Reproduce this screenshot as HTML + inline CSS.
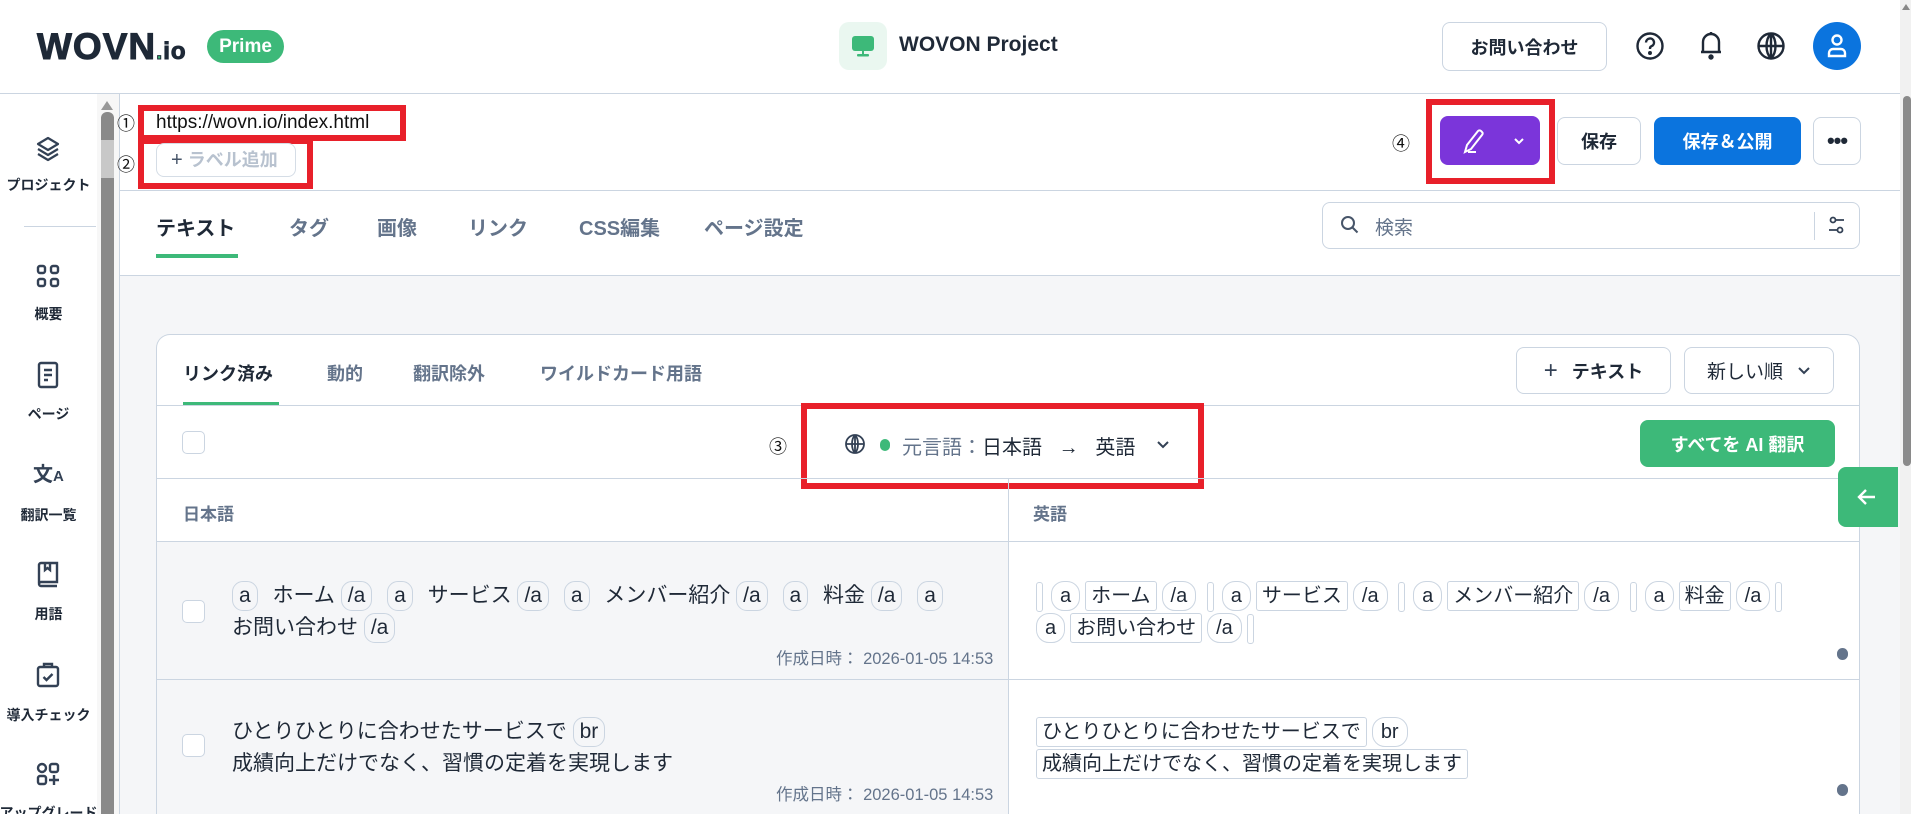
<!DOCTYPE html>
<html style="overflow:hidden;height:814px"><head><meta charset="utf-8">
<style>
*{box-sizing:border-box;margin:0;padding:0}
body{width:1911px;height:814px;overflow:hidden;background:#fff;font-family:"Liberation Sans","Noto Sans CJK JP",sans-serif;color:#1f2937;position:relative}
.a{position:absolute}
.btn{position:absolute;border:1px solid #cbd5e1;border-radius:8px;background:#fff;display:flex;align-items:center;justify-content:center;font-weight:bold;font-size:18px;color:#1f2937}
.red{position:absolute;border:6px solid #e8202a}
.sl{position:absolute;left:-10px;width:117px;text-align:center;font-size:14px;font-weight:bold;color:#1f2937;white-space:nowrap}
.si{position:absolute;left:34px;width:28px;height:28px}
.tab{position:absolute;top:212px;font-size:20px;color:#64748b;font-weight:bold}
.ct{position:absolute;top:360px;font-size:18px;color:#64748b;font-weight:bold}
.cb{position:absolute;left:182px;width:23px;height:23px;border:1.5px solid #cbd5e1;border-radius:5px;background:#fff}
.t{display:inline-block;border:1px solid #cbd5e1;border-radius:11px;padding:0 6px;line-height:28px;margin:0 9px 0 0}
.r{display:inline-block;border:1px solid #cbd5e1;border-radius:3px;padding:0 5px;line-height:28px;margin-right:5px}
.p{display:inline-block;border:1px solid #cbd5e1;border-radius:13px;padding:0 8px;line-height:28px;margin-right:5px}
.bar{display:inline-block;width:7px;height:30px;border:1px solid #cbd5e1;border-radius:3px;vertical-align:middle;margin-right:8px}
.date{position:absolute;font-size:16.5px;color:#64748b}
.num{position:absolute;font-size:18px;color:#111}
</style></head><body>
<div class="a" style="left:37px;top:26px;font-size:37px;font-weight:900;color:#1e2937;letter-spacing:1px;-webkit-text-stroke:1px #1e2937">WOVN<span style="color:#3db979;font-size:22px">.</span><span style="font-size:24px">io</span></div>
<div class="a" style="left:207px;top:30px;width:77px;height:33px;border-radius:17px;background:#3db979;color:#fff;font-weight:bold;font-size:19px;text-align:center;line-height:33px">Prime</div>
<div class="a" style="left:839px;top:22px;width:48px;height:48px;border-radius:10px;background:#eaf7f0"></div>
<svg class="a" style="left:850px;top:33px" width="26" height="26" viewBox="0 0 26 26"><rect x="2" y="3" width="22" height="15" rx="3" fill="#3db979"/><rect x="12" y="18" width="2" height="4" fill="#3db979"/><rect x="7" y="21" width="12" height="2.5" rx="1" fill="#3db979"/></svg>
<div class="a" style="left:899px;top:33px;font-size:21px;font-weight:bold;color:#1f2937">WOVON Project</div>
<div class="btn" style="left:1442px;top:22px;width:165px;height:49px;font-size:18px">お問い合わせ</div>
<svg class="a" style="left:1635px;top:31px" width="30" height="30" viewBox="0 0 30 30" fill="none" stroke="#1f2937" stroke-width="2.4"><circle cx="15" cy="15" r="12.5"/><path d="M11 11.5a4 4 0 1 1 5.5 3.7c-1 .4-1.5 1.2-1.5 2.3v.5"/><circle cx="15" cy="22" r=".8" fill="#1f2937"/></svg>
<svg class="a" style="left:1697px;top:29px" width="28" height="32" viewBox="0 0 28 32" fill="none" stroke="#1f2937" stroke-width="2.4"><path d="M6 23V13a8 8 0 0 1 16 0v10h2H4zM14 3v2"/><circle cx="14" cy="28" r="1.5" fill="#1f2937"/></svg>
<svg class="a" style="left:1756px;top:31px" width="30" height="30" viewBox="0 0 30 30" fill="none" stroke="#1f2937" stroke-width="2.4"><circle cx="15" cy="15" r="12.5"/><path d="M2.5 15h25M15 2.5c-6 6-6 19 0 25M15 2.5c6 6 6 19 0 25M15 2.5v25"/></svg>
<div class="a" style="left:1813px;top:22px;width:48px;height:48px;border-radius:50%;background:#0b74de"></div>
<svg class="a" style="left:1825px;top:33px" width="24" height="26" viewBox="0 0 24 26" fill="none" stroke="#fff" stroke-width="2.4"><circle cx="12" cy="7" r="4.5"/><path d="M4 23v-3a4 4 0 0 1 4-4h8a4 4 0 0 1 4 4v3z"/></svg>
<div class="a" style="left:0;top:93px;width:1900px;height:1px;background:#cbd5e1"></div>
<div class="a" style="left:1900px;top:0;width:11px;height:814px;background:#f1f1f1"></div>
<div class="a" style="left:1902px;top:4px;width:0;height:0;border-left:4px solid transparent;border-right:4px solid transparent;border-bottom:6px solid #888"></div>
<div class="a" style="left:1903px;top:96px;width:8px;height:370px;background:#8a8a8a;border-radius:4px"></div>
<div class="a" style="left:97px;top:94px;width:22px;height:720px;background:#f7f7f7"></div>
<div class="a" style="left:101px;top:101px;width:0;height:0;border-left:6px solid transparent;border-right:6px solid transparent;border-bottom:9px solid #999"></div>
<div class="a" style="left:101px;top:112px;width:13px;height:702px;background:#8a8a8a;border-radius:6px 6px 0 0"></div>
<div class="a" style="left:101px;top:140px;width:13px;height:38px;background:#c8c8c8"></div>
<div class="a" style="left:119px;top:94px;width:1px;height:720px;background:#cbd5e1"></div>
<svg class="si" style="top:135px" viewBox="0 0 28 28" fill="none" stroke="#334155" stroke-width="2.2" stroke-linejoin="round"><path d="M14 3l10 6-10 6-10-6zM4 14l10 6 10-6M4 19l10 6 10-6"/></svg>
<div class="sl" style="top:175px">プロジェクト</div>
<div class="a" style="left:24px;top:226px;width:72px;height:1px;background:#cbd5e1"></div>
<svg class="si" style="top:262px" viewBox="0 0 28 28" fill="none" stroke="#334155" stroke-width="2.4"><rect x="4" y="4" width="7" height="7" rx="2"/><rect x="17" y="4" width="7" height="7" rx="2"/><rect x="4" y="17" width="7" height="7" rx="2"/><rect x="17" y="17" width="7" height="7" rx="2"/></svg>
<div class="sl" style="top:304px">概要</div>
<svg class="si" style="top:361px" viewBox="0 0 28 28" fill="none" stroke="#334155" stroke-width="2.4"><rect x="5" y="2" width="18" height="24" rx="2"/><path d="M10 9h8M10 14h8M10 19h4"/></svg>
<div class="sl" style="top:404px">ページ</div>
<div class="a" style="left:33px;top:458px;font-size:20px;font-weight:bold;color:#334155">文<span style="font-size:15px">A</span></div>
<div class="sl" style="top:505px">翻訳一覧</div>
<svg class="si" style="top:560px" viewBox="0 0 28 28" fill="none" stroke="#334155" stroke-width="2.4"><path d="M5 23V5a2 2 0 0 1 2-2h16v19H7a2 2 0 0 0 0 4h16M11 3v7l2.5-2 2.5 2V3"/></svg>
<div class="sl" style="top:604px">用語</div>
<svg class="si" style="top:661px" viewBox="0 0 28 28" fill="none" stroke="#334155" stroke-width="2.4"><rect x="4" y="6" width="20" height="19" rx="2"/><path d="M10 6V3h8v3M9.5 16l3 3 6-6"/></svg>
<div class="sl" style="top:705px">導入チェック</div>
<svg class="si" style="top:760px" viewBox="0 0 28 28" fill="none" stroke="#334155" stroke-width="2.4"><circle cx="8" cy="8" r="4"/><rect x="16" y="4" width="8" height="8" rx="2"/><rect x="4" y="16" width="8" height="8" rx="2"/><path d="M20 15v10M15 20h10"/></svg>
<div class="sl" style="top:803px">アップグレード</div>
<div class="num" style="left:117px;top:110px">①</div>
<div class="red" style="left:138px;top:105px;width:268px;height:36px"></div>
<div class="a" style="left:156px;top:112px;font-size:19px;color:#111">https://wovn.io/index.html</div>
<div class="num" style="left:117px;top:151px">②</div>
<div class="red" style="left:138px;top:138px;width:175px;height:51px"></div>
<div class="a" style="left:156px;top:143px;width:140px;height:34px;border:1px solid #d5dde6;border-radius:8px;font-size:18px;color:#b8c2cf;font-weight:bold;line-height:32px;padding-left:14px"><span style="color:#475569;font-weight:normal;font-size:20px">+</span> ラベル追加</div>
<div class="num" style="left:1392px;top:130px">④</div>
<div class="red" style="left:1426px;top:99px;width:129px;height:85px"></div>
<div class="a" style="left:1440px;top:116px;width:100px;height:49px;background:#7b35da;border-radius:8px"></div>
<svg class="a" style="left:1462px;top:127px" width="70" height="28" viewBox="0 0 70 28" fill="none" stroke="#fff" stroke-width="2"><path d="M3 25l2-7L16 4a2 2 0 0 1 3 0l1 1a2 2 0 0 1 0 3L9 22zM6 25h8M53 12l4 4 4-4"/></svg>
<div class="btn" style="left:1557px;top:117px;width:84px;height:48px">保存</div>
<div class="btn" style="left:1654px;top:117px;width:147px;height:48px;background:#0b74de;border-color:#0b74de;color:#fff">保存＆公開</div>
<div class="btn" style="left:1813px;top:117px;width:48px;height:48px;font-size:22px;letter-spacing:-1px">•••</div>
<div class="a" style="left:119px;top:190px;width:1781px;height:1px;background:#cbd5e1"></div>
<div class="tab" style="left:156px;color:#1f2937">テキスト</div>
<div class="a" style="left:156px;top:254px;width:82px;height:4px;background:#3db979"></div>
<div class="tab" style="left:289px">タグ</div>
<div class="tab" style="left:377px">画像</div>
<div class="tab" style="left:468px">リンク</div>
<div class="tab" style="left:579px">CSS編集</div>
<div class="tab" style="left:704px">ページ設定</div>
<div class="a" style="left:1322px;top:202px;width:538px;height:47px;border:1px solid #cbd5e1;border-radius:8px"></div>
<svg class="a" style="left:1340px;top:215px" width="20" height="20" viewBox="0 0 20 20" fill="none" stroke="#475569" stroke-width="2"><circle cx="8" cy="8" r="6"/><path d="M12.5 12.5l5 5"/></svg>
<div class="a" style="left:1375px;top:213px;font-size:19px;color:#64748b">検索</div>
<div class="a" style="left:1814px;top:212px;width:1px;height:28px;background:#cbd5e1"></div>
<svg class="a" style="left:1826px;top:214px" width="22" height="22" viewBox="0 0 22 22" fill="none" stroke="#334155" stroke-width="1.8"><circle cx="7" cy="6" r="2.5"/><path d="M10 6h8M3 16h8"/><circle cx="14" cy="16" r="2.5"/></svg>
<div class="a" style="left:120px;top:275px;width:1780px;height:539px;background:#f5f6f8;border-top:1px solid #cbd5e1"></div>
<div class="a" style="left:156px;top:334px;width:1704px;height:480px;background:#fff;border:1px solid #cbd5e1;border-bottom:none;border-radius:14px 14px 0 0"></div>
<div class="ct" style="left:183px;color:#1f2937">リンク済み</div>
<div class="a" style="left:183px;top:402px;width:96px;height:4px;background:#3db979"></div>
<div class="ct" style="left:327px">動的</div>
<div class="ct" style="left:413px">翻訳除外</div>
<div class="ct" style="left:540px">ワイルドカード用語</div>
<div class="btn" style="left:1516px;top:347px;width:155px;height:47px"><span style="font-weight:normal;font-size:24px;margin-right:14px;color:#334155">+</span>テキスト</div>
<div class="btn" style="left:1684px;top:347px;width:150px;height:47px;font-weight:normal;font-size:19px">新しい順<svg style="margin-left:14px" width="14" height="10" viewBox="0 0 14 10" fill="none" stroke="#334155" stroke-width="2"><path d="M2 2l5 5 5-5"/></svg></div>
<div class="a" style="left:157px;top:405px;width:1702px;height:1px;background:#cbd5e1"></div>
<div class="cb" style="top:431px"></div>
<div class="num" style="left:769px;top:433px">③</div>
<div class="red" style="left:801px;top:403px;width:403px;height:86px"></div>
<svg class="a" style="left:844px;top:433px" width="22" height="22" viewBox="0 0 22 22" fill="none" stroke="#334155" stroke-width="1.8"><circle cx="11" cy="11" r="9"/><path d="M2 11h18M11 2v18M11 2c-4 4-4 14 0 18M11 2c4 4 4 14 0 18"/></svg>
<div class="a" style="left:880px;top:439px;width:10px;height:12px;border-radius:5px;background:#3db979"></div>
<div class="a" style="left:902px;top:431px;font-size:20px;color:#64748b;white-space:nowrap">元言語：<span style="color:#1f2937">日本語 &nbsp;&nbsp;→&nbsp;&nbsp; 英語</span></div>
<svg class="a" style="left:1156px;top:440px" width="14" height="10" viewBox="0 0 14 10" fill="none" stroke="#334155" stroke-width="2"><path d="M2 2l5 5 5-5"/></svg>
<div class="btn" style="left:1640px;top:420px;width:195px;height:47px;background:#3db979;border-color:#3db979;color:#fff">すべてを AI 翻訳</div>
<div class="a" style="left:157px;top:478px;width:1702px;height:1px;background:#cbd5e1"></div>
<div class="a" style="left:183px;top:500px;font-size:17px;color:#64748b;font-weight:bold">日本語</div>
<div class="a" style="left:1033px;top:500px;font-size:17px;color:#64748b;font-weight:bold">英語</div>
<div class="a" style="left:1008px;top:478px;width:1px;height:336px;background:#cbd5e1"></div>
<div class="a" style="left:157px;top:541px;width:1702px;height:1px;background:#cbd5e1"></div>
<div class="a" style="left:157px;top:542px;width:851px;height:272px;background:#f5f6f8"></div>
<div class="a" style="left:157px;top:679px;width:1702px;height:1px;background:#cbd5e1"></div>
<div class="a" style="left:1838px;top:467px;width:60px;height:60px;background:#3db979;border-radius:8px 0 0 8px"></div>
<svg class="a" style="left:1856px;top:486px" width="22" height="22" viewBox="0 0 22 22" fill="none" stroke="#fff" stroke-width="2.4"><path d="M19 11H4M10 4l-7 7 7 7"/></svg>
<div class="cb" style="top:600px"></div>
<div class="a" style="left:232px;top:580px;width:770px;font-size:21px;line-height:32px;color:#1f2937;white-space:nowrap"><span class="t">a</span> ホーム <span class="t">/a</span> <span class="t">a</span> サービス <span class="t">/a</span> <span class="t">a</span> メンバー紹介 <span class="t">/a</span> <span class="t">a</span> 料金 <span class="t">/a</span> <span class="t">a</span><br>お問い合わせ <span class="t">/a</span></div>
<div class="date" style="left:776px;top:645px">作成日時： 2026-01-05 14:53</div>
<div class="a" style="left:1036px;top:580px;width:820px;font-size:20px;line-height:32px;color:#1f2937;white-space:nowrap"><span class="bar"></span><span class="p">a</span><span class="r">ホーム</span><span class="p">/a</span> <span class="bar"></span><span class="p">a</span><span class="r">サービス</span><span class="p">/a</span> <span class="bar"></span><span class="p">a</span><span class="r">メンバー紹介</span><span class="p">/a</span> <span class="bar"></span><span class="p">a</span><span class="r">料金</span><span class="p">/a</span><span class="bar"></span><br><span class="p">a</span><span class="r">お問い合わせ</span><span class="p">/a</span><span class="bar"></span></div>
<div class="a" style="left:1837px;top:648px;width:11px;height:12px;border-radius:6px;background:#64748b"></div>
<div class="cb" style="top:734px"></div>
<div class="a" style="left:232px;top:716px;font-size:21px;line-height:32px;color:#1f2937;white-space:nowrap">ひとりひとりに合わせたサービスで <span class="t">br</span><br>成績向上だけでなく、習慣の定着を実現します</div>
<div class="date" style="left:776px;top:781px">作成日時： 2026-01-05 14:53</div>
<div class="a" style="left:1036px;top:716px;font-size:20px;line-height:32px;color:#1f2937;white-space:nowrap"><span class="r">ひとりひとりに合わせたサービスで</span><span class="p">br</span><br><span class="r">成績向上だけでなく、習慣の定着を実現します</span></div>
<div class="a" style="left:1837px;top:784px;width:11px;height:12px;border-radius:6px;background:#64748b"></div>
</body></html>
